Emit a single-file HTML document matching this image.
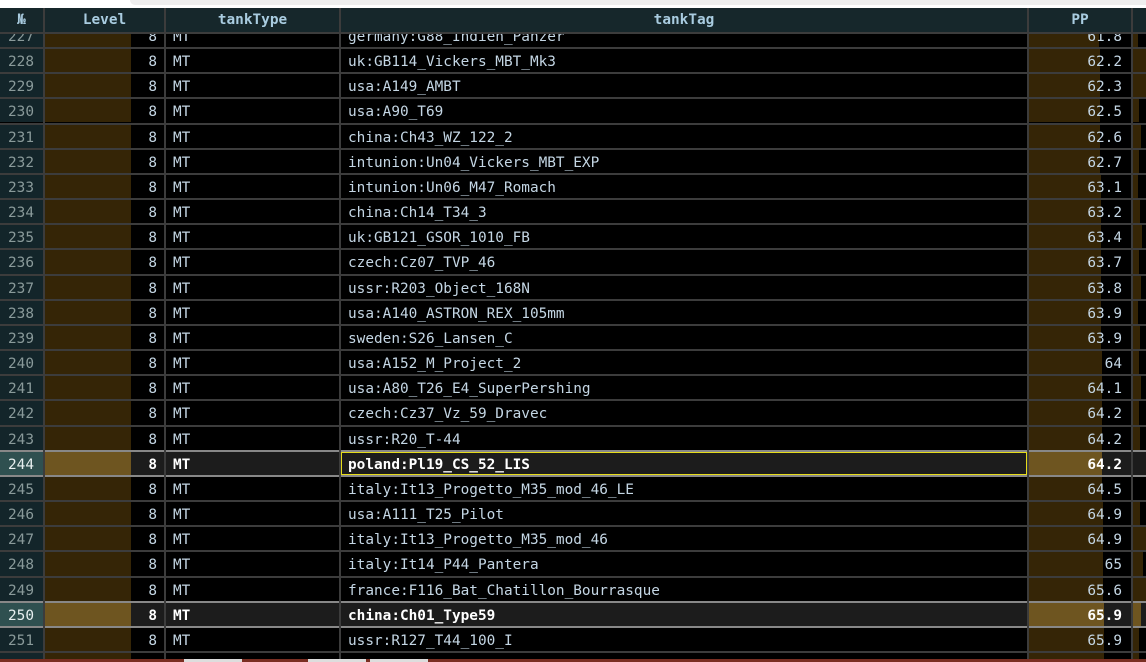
<!DOCTYPE html>
<html><head><meta charset="utf-8"><style>
*{margin:0;padding:0;box-sizing:border-box}
html{width:1146px;height:662px;overflow:hidden}
body{width:1146px;height:662px;overflow:hidden;background:#000;position:relative;font-family:"DejaVu Sans Mono","Liberation Mono",monospace;font-size:14.4px;color:#c4d6e4}
.top{position:absolute;left:0;top:0;width:1146px;height:8px;background:#fff}
.top i{position:absolute;left:130px;top:0;width:1016px;height:5px;background:#eee;border-radius:0 0 0 6px}
.hd{position:absolute;left:0;top:8px;width:1146px;height:26px;background:#16272b;font-weight:bold;color:#a9cce0;border-bottom:2px solid #3c3c3c;z-index:4}
.hd div{position:absolute;top:0;height:25px;line-height:24px;text-align:center}
.vl{position:absolute;top:8px;height:654px;width:2px;background:#3c3c3c;z-index:5}
.r{position:absolute;left:0;width:1146px;height:25.17px;border-top:2px solid #3c3c3c}
.r>div{position:absolute;top:0;height:23.17px;line-height:26px;white-space:pre}
.n{left:0;width:43px;background:#13252a;color:#8a9a9a;padding-left:8px}
.lb{left:45px;width:86px;background:#352506}
.lv{left:45px;width:119px;text-align:right;padding-right:7px}
.t{left:166px;padding-left:7px}
.g{left:341px;padding-left:7px}
.pb{left:1029px;background:#352506}
.pp{left:1029px;width:102px;text-align:right;padding-right:9px}
.xb{left:1133px;background:#352506}
.h{background:#1c1c1c;font-weight:bold;color:#fff}
.h .n{background:#2f5050;color:#e8f0f0;font-weight:normal}
.h .lb,.h .pb,.h .xb{background:#6e5520}
.sel{position:absolute;left:341px;width:686px;height:23px;border:1px solid #e6dc1a;z-index:2}
.bot{position:absolute;left:0;top:659px;width:1146px;height:3px;background:#7a2e22;z-index:6}
.bot i{position:absolute;top:0;height:3px;background:#ddd}
</style></head><body>
<div class="top"><i></i></div>
<div class="r" style="top:22px"><div class="n">227</div><div class="lb"></div><div class="lv">8</div><div class="t">MT</div><div class="g">germany:G88_Indien_Panzer</div><div class="pb" style="width:70px"></div><div class="pp">61.8</div><div class="xb" style="width:5px"></div></div>
<div class="r" style="top:47px"><div class="n">228</div><div class="lb"></div><div class="lv">8</div><div class="t">MT</div><div class="g">uk:GB114_Vickers_MBT_Mk3</div><div class="pb" style="width:71px"></div><div class="pp">62.2</div><div class="xb" style="width:13px"></div></div>
<div class="r" style="top:72.17px"><div class="n">229</div><div class="lb"></div><div class="lv">8</div><div class="t">MT</div><div class="g">usa:A149_AMBT</div><div class="pb" style="width:71px"></div><div class="pp">62.3</div><div class="xb" style="width:13px"></div></div>
<div class="r" style="top:97.34px"><div class="n">230</div><div class="lb"></div><div class="lv">8</div><div class="t">MT</div><div class="g">usa:A90_T69</div><div class="pb" style="width:71px"></div><div class="pp">62.5</div><div class="xb" style="width:6px"></div></div>
<div class="r" style="top:122.51px"><div class="n">231</div><div class="lb"></div><div class="lv">8</div><div class="t">MT</div><div class="g">china:Ch43_WZ_122_2</div><div class="pb" style="width:71px"></div><div class="pp">62.6</div><div class="xb" style="width:8px"></div></div>
<div class="r" style="top:147.68px"><div class="n">232</div><div class="lb"></div><div class="lv">8</div><div class="t">MT</div><div class="g">intunion:Un04_Vickers_MBT_EXP</div><div class="pb" style="width:71px"></div><div class="pp">62.7</div><div class="xb" style="width:6px"></div></div>
<div class="r" style="top:172.85px"><div class="n">233</div><div class="lb"></div><div class="lv">8</div><div class="t">MT</div><div class="g">intunion:Un06_M47_Romach</div><div class="pb" style="width:72px"></div><div class="pp">63.1</div><div class="xb" style="width:5px"></div></div>
<div class="r" style="top:198.02px"><div class="n">234</div><div class="lb"></div><div class="lv">8</div><div class="t">MT</div><div class="g">china:Ch14_T34_3</div><div class="pb" style="width:72px"></div><div class="pp">63.2</div><div class="xb" style="width:7px"></div></div>
<div class="r" style="top:223.19px"><div class="n">235</div><div class="lb"></div><div class="lv">8</div><div class="t">MT</div><div class="g">uk:GB121_GSOR_1010_FB</div><div class="pb" style="width:72px"></div><div class="pp">63.4</div><div class="xb" style="width:9px"></div></div>
<div class="r" style="top:248.36px"><div class="n">236</div><div class="lb"></div><div class="lv">8</div><div class="t">MT</div><div class="g">czech:Cz07_TVP_46</div><div class="pb" style="width:72px"></div><div class="pp">63.7</div><div class="xb" style="width:6px"></div></div>
<div class="r" style="top:273.53px"><div class="n">237</div><div class="lb"></div><div class="lv">8</div><div class="t">MT</div><div class="g">ussr:R203_Object_168N</div><div class="pb" style="width:72px"></div><div class="pp">63.8</div><div class="xb" style="width:8px"></div></div>
<div class="r" style="top:298.7px"><div class="n">238</div><div class="lb"></div><div class="lv">8</div><div class="t">MT</div><div class="g">usa:A140_ASTRON_REX_105mm</div><div class="pb" style="width:72px"></div><div class="pp">63.9</div><div class="xb" style="width:5px"></div></div>
<div class="r" style="top:323.87px"><div class="n">239</div><div class="lb"></div><div class="lv">8</div><div class="t">MT</div><div class="g">sweden:S26_Lansen_C</div><div class="pb" style="width:72px"></div><div class="pp">63.9</div><div class="xb" style="width:7px"></div></div>
<div class="r" style="top:349.04px"><div class="n">240</div><div class="lb"></div><div class="lv">8</div><div class="t">MT</div><div class="g">usa:A152_M_Project_2</div><div class="pb" style="width:73px"></div><div class="pp">64</div><div class="xb" style="width:6px"></div></div>
<div class="r" style="top:374.21px"><div class="n">241</div><div class="lb"></div><div class="lv">8</div><div class="t">MT</div><div class="g">usa:A80_T26_E4_SuperPershing</div><div class="pb" style="width:73px"></div><div class="pp">64.1</div><div class="xb" style="width:8px"></div></div>
<div class="r" style="top:399.38px"><div class="n">242</div><div class="lb"></div><div class="lv">8</div><div class="t">MT</div><div class="g">czech:Cz37_Vz_59_Dravec</div><div class="pb" style="width:73px"></div><div class="pp">64.2</div><div class="xb" style="width:6px"></div></div>
<div class="r" style="top:424.55px"><div class="n">243</div><div class="lb"></div><div class="lv">8</div><div class="t">MT</div><div class="g">ussr:R20_T-44</div><div class="pb" style="width:73px"></div><div class="pp">64.2</div><div class="xb" style="width:7px"></div></div>
<div class="r h" style="top:449.72px;border-color:#888"><div class="n">244</div><div class="lb"></div><div class="lv">8</div><div class="t">MT</div><div class="g">poland:Pl19_CS_52_LIS</div><div class="pb" style="width:73px"></div><div class="pp">64.2</div><div class="xb" style="width:0px"></div><div class="sel" style="top:0"></div></div>
<div class="r" style="top:474.89px;border-color:#888"><div class="n">245</div><div class="lb"></div><div class="lv">8</div><div class="t">MT</div><div class="g">italy:It13_Progetto_M35_mod_46_LE</div><div class="pb" style="width:73px"></div><div class="pp">64.5</div><div class="xb" style="width:0px"></div></div>
<div class="r" style="top:500.06px"><div class="n">246</div><div class="lb"></div><div class="lv">8</div><div class="t">MT</div><div class="g">usa:A111_T25_Pilot</div><div class="pb" style="width:74px"></div><div class="pp">64.9</div><div class="xb" style="width:7px"></div></div>
<div class="r" style="top:525.23px"><div class="n">247</div><div class="lb"></div><div class="lv">8</div><div class="t">MT</div><div class="g">italy:It13_Progetto_M35_mod_46</div><div class="pb" style="width:74px"></div><div class="pp">64.9</div><div class="xb" style="width:13px"></div></div>
<div class="r" style="top:550.4px"><div class="n">248</div><div class="lb"></div><div class="lv">8</div><div class="t">MT</div><div class="g">italy:It14_P44_Pantera</div><div class="pb" style="width:74px"></div><div class="pp">65</div><div class="xb" style="width:10px"></div></div>
<div class="r" style="top:575.57px"><div class="n">249</div><div class="lb"></div><div class="lv">8</div><div class="t">MT</div><div class="g">france:F116_Bat_Chatillon_Bourrasque</div><div class="pb" style="width:74px"></div><div class="pp">65.6</div><div class="xb" style="width:13px"></div></div>
<div class="r h" style="top:600.74px;border-color:#888"><div class="n">250</div><div class="lb"></div><div class="lv">8</div><div class="t">MT</div><div class="g">china:Ch01_Type59</div><div class="pb" style="width:75px"></div><div class="pp">65.9</div><div class="xb" style="width:8px"></div></div>
<div class="r" style="top:625.91px;border-color:#888;height:33px"><div class="n">251</div><div class="lb"></div><div class="lv">8</div><div class="t">MT</div><div class="g">ussr:R127_T44_100_I</div><div class="pb" style="width:75px"></div><div class="pp">65.9</div><div class="xb" style="width:6px"></div></div>
<div class="r" style="top:651.08px;height:8px;overflow:hidden"><div class="n" style="height:6px"></div><div class="lb" style="height:6px"></div><div class="pb" style="width:75px;height:6px"></div><div class="xb" style="width:6px;height:6px"></div></div>
<div class="hd">
<div style="left:0;width:43px">№</div><div style="left:45px;width:119px">Level</div><div style="left:166px;width:173px">tankType</div><div style="left:341px;width:686px">tankTag</div><div style="left:1029px;width:102px">PP</div>
</div>
<div class="vl" style="left:43px"></div><div class="vl" style="left:164px"></div><div class="vl" style="left:339px"></div><div class="vl" style="left:1027px"></div><div class="vl" style="left:1131px"></div>
<div class="bot"><i style="left:184px;width:58px"></i><i style="left:308px;width:58px"></i><i style="left:370px;width:58px"></i></div>
</body></html>
